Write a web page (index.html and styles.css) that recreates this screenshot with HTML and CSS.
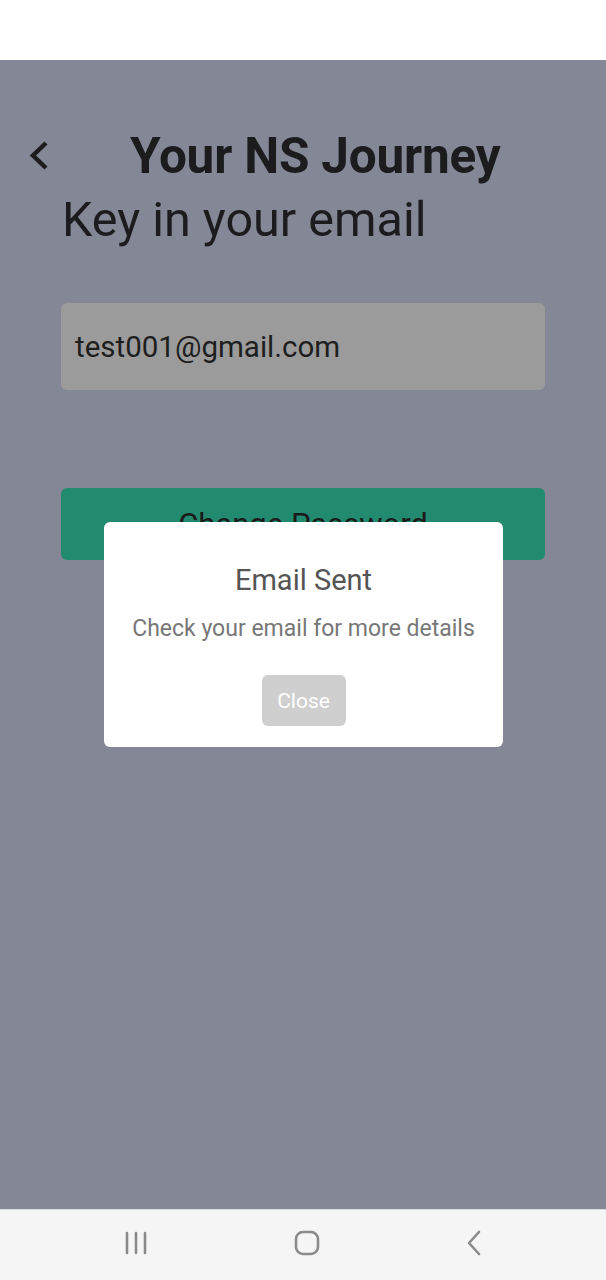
FILE: index.html
```html
<!DOCTYPE html>
<html>
<head>
<meta charset="utf-8">
<link rel="stylesheet" href="styles.css">
</head>
<body>
<div class="phone">
  <div class="statusbar"></div>
  <main class="screen">
    <div class="header">
      <svg class="back" width="26" height="32" viewBox="0 0 26 32"><path d="M20 3 L7 15.5 L20 28" fill="none" stroke="#1c1c1c" stroke-width="4.5" stroke-linecap="butt" stroke-linejoin="miter"/></svg>
      <h1 class="title">Your NS Journey</h1>
    </div>
    <div class="content">
      <h2 class="label">Key in your email</h2>
      <div class="input">test001@gmail.com</div>
      <div class="btn">Change Password</div>
    </div>
    <div class="modal">
      <div class="modal-title">Email Sent</div>
      <div class="modal-text">Check your email for more details</div>
      <div class="close">Close</div>
    </div>
  </main>
  <nav class="navbar">
    <svg width="24" height="24" viewBox="0 0 24 24"><path d="M3 2v20M12 2v20M21 2v20" stroke="#8a8a8a" stroke-width="2.6" stroke-linecap="round"/></svg>
    <svg width="26" height="26" viewBox="0 0 26 26"><rect x="2" y="2" width="22" height="22" rx="7" fill="none" stroke="#8a8a8a" stroke-width="2.6"/></svg>
    <svg width="16" height="26" viewBox="0 0 16 26"><path d="M13 2 L3 13 L13 24" fill="none" stroke="#8a8a8a" stroke-width="2.6" stroke-linecap="round" stroke-linejoin="round"/></svg>
  </nav>
</div>
</body>
</html>
```
FILE: styles.css
```css
* { box-sizing: border-box; }
html, body { margin: 0; padding: 0; }
body { font-family: Roboto, "Noto Sans", sans-serif; background: #fff; }
.phone { width: 606px; height: 1280px; display: flex; flex-direction: column; }
.statusbar { height: 60px; background: #ffffff; flex: none; }
.screen { flex: 1; background: #838796; position: relative; }
.header { display: flex; align-items: center; height: 56px; margin-top: 68px; padding-left: 26px; }
.back { flex: none; }
.title { margin: 0 0 0 78px; font-size: 49.5px; font-weight: 700; color: #1c1c1e; line-height: 56px; letter-spacing: -0.2px; }
.content { padding: 0 61px; }
.label { margin: 9px 0 0 1px; font-size: 48.5px; font-weight: 400; color: #1c1c1e; line-height: 54px; }
.input { margin-top: 56px; height: 87px; background: #9b9b9b; border-radius: 6px; padding-left: 14px; display: flex; align-items: center; font-size: 29.5px; color: #1e1e1e; }
.btn { margin-top: 98px; height: 72px; background: #228a6f; border-radius: 6px; display: flex; align-items: center; justify-content: center; font-size: 31px; color: #1b1b1b; }
.modal { position: absolute; left: 104px; top: 462px; width: 399px; height: 225px; background: #fff; border-radius: 6px; display: flex; flex-direction: column; align-items: center; padding-top: 41px; }
.modal-title { font-size: 29px; color: #555; line-height: 34px; }
.modal-text { margin-top: 18px; font-size: 23px; color: #777; line-height: 28px; }
.close { margin-top: 32px; width: 84px; height: 51px; background: #cfcfcf; border-radius: 6px; color: #fff; font-size: 21px; display: flex; align-items: center; justify-content: center; }
.navbar { height: 71px; flex: none; background: #f5f5f5; border-top: 1px solid #dcdde2; display: flex; align-items: center; justify-content: space-between; padding: 0 124px 4px 124px; }
```
